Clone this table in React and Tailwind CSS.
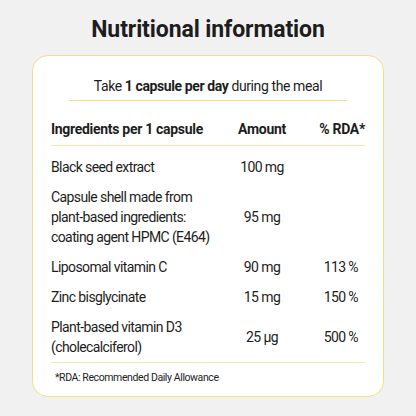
export default function App() {
  const rows = [
    { name: ["Black seed extract"], amount: "100 mg", rda: "" },
    { name: ["Capsule shell made from", "plant-based ingredients:", "coating agent HPMC (E464)"], amount: "95 mg", rda: "" },
    { name: ["Liposomal vitamin C"], amount: "90 mg", rda: "113 %" },
    { name: ["Zinc bisglycinate"], amount: "15 mg", rda: "150 %" },
    { name: ["Plant-based vitamin D3", "(cholecalciferol)"], amount: "25 µg", rda: "500 %" },
  ];
  return (
    <div className="w-[416px] h-[416px] bg-[#f2f1f1] text-[#1d1d1d] flex flex-col items-center" style={{ fontFamily: 'Roboto, "Liberation Sans", sans-serif' }}>
      <h1 className="mt-[15px] text-[23px] leading-[30px] font-bold tracking-[-0.1px]">Nutritional information</h1>
      <div className="mt-[10px] w-[352px] h-[342px] bg-white border border-[#f7dc88] rounded-[16px] flex flex-col px-[18px]">
        <div className="mt-[21px] text-[14px] leading-[18px] text-center tracking-[-0.4px]">
          Take <span className="font-bold">1 capsule per day</span> during the meal
        </div>
        <div className="mt-[5px] mx-[18px] h-px bg-[#f7dc88]" />
        <div className="mt-[19px] flex text-[14px] leading-[18px] font-bold tracking-[-0.3px]">
          <div className="w-[172px]">Ingredients per 1 capsule</div>
          <div className="w-[78px] text-center">Amount</div>
          <div className="flex-1 text-right">% RDA*</div>
        </div>
        <div className="mt-[7px] h-px bg-[#f7e6b0]" />
        <div className="mt-[11px] flex flex-col gap-[10px] text-[14px] leading-[20px] tracking-[-0.6px]">
          {rows.map((r, i) => (
            <div key={i} className="flex items-center">
              <div className="w-[172px]">
                {r.name.map((n, j) => (
                  <div key={j}>{n}</div>
                ))}
              </div>
              <div className="w-[78px] text-center">{r.amount}</div>
              <div className="flex-1 text-right pr-[7px]">{r.rda}</div>
            </div>
          ))}
        </div>
        <div className="mt-[5px] h-px bg-[#f7e6b0]" />
        <div className="mt-[8px] text-[10.5px] leading-[14px] pl-[4px] tracking-[-0.4px]">*RDA: Recommended Daily Allowance</div>
      </div>
    </div>
  );
}
